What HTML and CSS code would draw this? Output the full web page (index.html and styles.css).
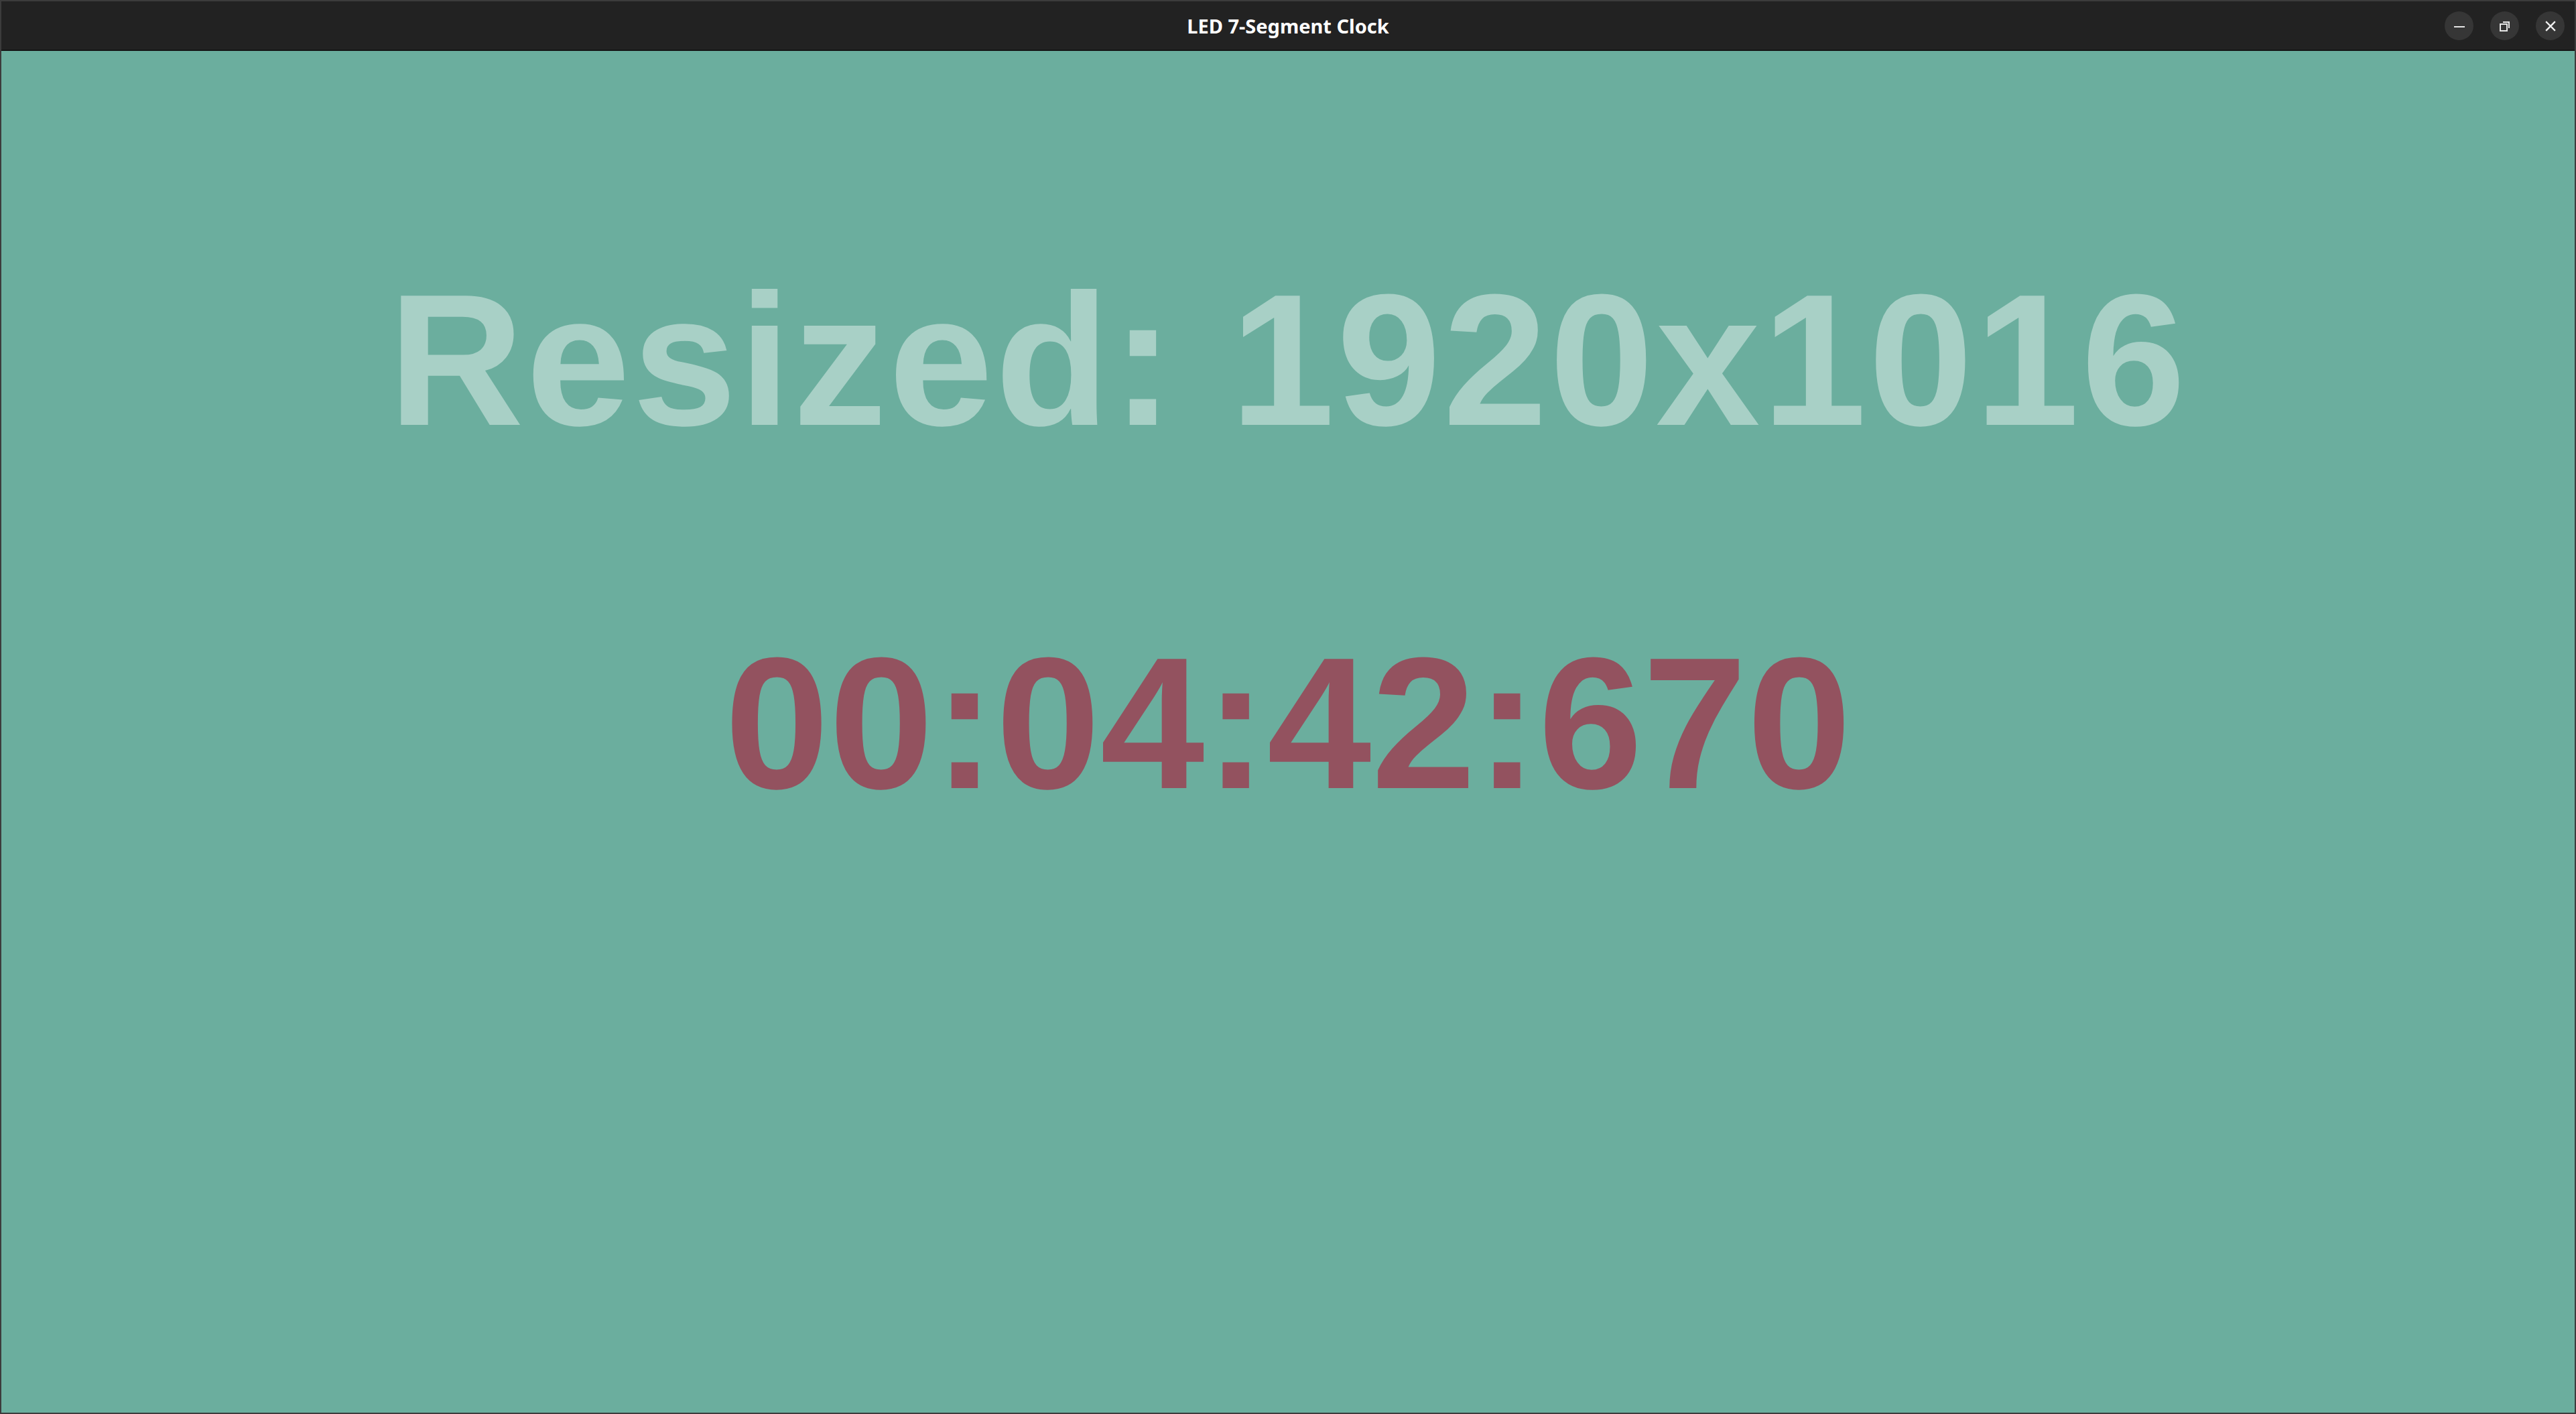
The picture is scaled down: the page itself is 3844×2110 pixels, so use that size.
FILE: index.html
```html
<!DOCTYPE html>
<html lang="en">
<head>
<meta charset="utf-8">
<title>LED 7-Segment Clock</title>
<link rel="stylesheet" href="styles.css">
</head>
<body>
<div class="window">
  <header class="titlebar">
    <div class="title">LED 7-Segment Clock</div>
    <div class="controls">
      <button class="ctl" aria-label="Minimize">
        <svg width="20" height="20" viewBox="0 0 20 20"><rect x="2" y="10" width="16" height="2" fill="#e6e6e6"/></svg>
      </button>
      <button class="ctl" aria-label="Restore">
        <svg width="20" height="20" viewBox="0 0 20 20" fill="none" stroke="#e6e6e6" stroke-width="2"><rect x="3" y="7" width="10" height="10"/><path d="M7 4 H16 V13"/></svg>
      </button>
      <button class="ctl" aria-label="Close">
        <svg width="20" height="20" viewBox="0 0 20 20" stroke="#f0f0f0" stroke-width="2.4" stroke-linecap="square"><path d="M4 4 L16 16 M16 4 L4 16"/></svg>
      </button>
    </div>
  </header>
  <main class="content">
    <div class="resized">Resized: 1920x1016</div>
    <div class="clock">00:04:42:670</div>
  </main>
</div>
</body>
</html>
```
FILE: styles.css
```css
html, body {
  margin: 0;
  padding: 0;
  background: #3a3a3a;
}
.window {
  width: 3844px;
  height: 2110px;
  box-sizing: border-box;
  border: 2px solid #3c3c3c;
  display: flex;
  flex-direction: column;
  background: #222222;
  overflow: hidden;
}
.titlebar {
  position: relative;
  height: 72px;
  flex: none;
  background: #222222;
  border-bottom: 2px solid #151515;
  display: flex;
  align-items: center;
  justify-content: center;
}
.title {
  color: #ffffff;
  font-family: "Noto Sans", "DejaVu Sans", sans-serif;
  font-weight: 700;
  font-size: 29px;
}
.controls {
  position: absolute;
  right: 15px;
  top: 15px;
  display: flex;
  gap: 25px;
}
.ctl {
  width: 43px;
  height: 43px;
  border-radius: 50%;
  border: none;
  padding: 0;
  background: #363636;
  display: flex;
  align-items: center;
  justify-content: center;
}
.content {
  flex: 1;
  background: #6bae9e;
  display: flex;
  flex-direction: column;
  align-items: center;
  padding-top: 321px;
  gap: 262px;
  font-family: "Liberation Sans", Arial, sans-serif;
  font-weight: 700;
}
.resized {
  font-size: 280px;
  line-height: 280px;
  letter-spacing: 3px;
  color: #a8d0c6;
  white-space: nowrap;
}
.clock {
  font-size: 280px;
  line-height: 280px;
  color: #93525f;
  white-space: nowrap;
}
```
